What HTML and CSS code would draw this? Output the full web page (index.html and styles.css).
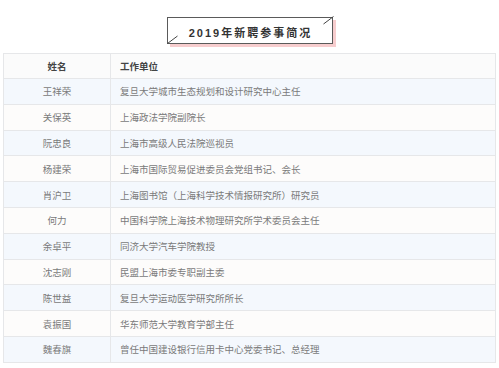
FILE: index.html
```html
<!DOCTYPE html>
<html lang="zh-CN">
<head>
<meta charset="utf-8">
<title>2019年新聘参事简况</title>
<link rel="stylesheet" href="styles.css">
</head>
<body>
<div class="page">
  <div class="title-wrap">
    <div class="title">
      <span class="title-text">2019年新聘参事简况</span>
      <svg class="corner corner-tr" width="11" height="9" viewBox="0 0 11 9"><line x1="0.5" y1="8" x2="10.5" y2="0.5" stroke="#444" stroke-width="1"/></svg>
      <svg class="corner corner-bl" width="11" height="9" viewBox="0 0 11 9"><line x1="0.5" y1="8.5" x2="10.5" y2="1" stroke="#444" stroke-width="1"/></svg>
    </div>
  </div>
  <table class="list">
    <thead>
      <tr><th class="c-name">姓名</th><th class="c-work">工作单位</th></tr>
    </thead>
    <tbody>
      <tr><td class="c-name">王祥荣</td><td class="c-work">复旦大学城市生态规划和设计研究中心主任</td></tr>
      <tr><td class="c-name">关保英</td><td class="c-work">上海政法学院副院长</td></tr>
      <tr><td class="c-name">阮忠良</td><td class="c-work">上海市高级人民法院巡视员</td></tr>
      <tr><td class="c-name">杨建荣</td><td class="c-work">上海市国际贸易促进委员会党组书记、会长</td></tr>
      <tr><td class="c-name">肖沪卫</td><td class="c-work">上海图书馆（上海科学技术情报研究所）研究员</td></tr>
      <tr><td class="c-name">何力</td><td class="c-work">中国科学院上海技术物理研究所学术委员会主任</td></tr>
      <tr><td class="c-name">余卓平</td><td class="c-work">同济大学汽车学院教授</td></tr>
      <tr><td class="c-name">沈志刚</td><td class="c-work">民盟上海市委专职副主委</td></tr>
      <tr><td class="c-name">陈世益</td><td class="c-work">复旦大学运动医学研究所所长</td></tr>
      <tr><td class="c-name">袁振国</td><td class="c-work">华东师范大学教育学部主任</td></tr>
      <tr><td class="c-name">魏春旗</td><td class="c-work">曾任中国建设银行信用卡中心党委书记、总经理</td></tr>
    </tbody>
  </table>
</div>
</body>
</html>
```
FILE: styles.css
```css
html, body {
  margin: 0;
  padding: 0;
  background: #ffffff;
}
body {
  font-family: "Noto Sans CJK SC", "Noto Sans", sans-serif;
}
.page {
  padding: 17px 3px 0 3px;
}
.title-wrap {
  display: flex;
  justify-content: center;
}
.title {
  position: relative;
  box-sizing: border-box;
  width: 166px;
  height: 27px;
  border: 1px solid #5a5a5a;
  background: #ffffff;
  box-shadow: 3px 3px 0 #f7cdce;
  display: flex;
  align-items: center;
  justify-content: center;
  padding-top: 2px;
}
.title-text {
  font-family: "Liberation Sans", "Noto Sans CJK SC", sans-serif;
  font-size: 11px;
  font-weight: bold;
  letter-spacing: 2px;
  color: #333333;
  margin-right: -2px;
}
.corner {
  position: absolute;
  display: block;
}
.corner-tr {
  right: -2px;
  top: -2px;
}
.corner-bl {
  left: -1px;
  bottom: -1px;
}
.list {
  margin-top: 9px;
  width: 493px;
  border-collapse: collapse;
  table-layout: fixed;
  font-size: 9.5px;
}
.list th,
.list td {
  border: 1px solid #e6e7e9;
  height: 24.8px;
  padding: 0;
  line-height: 12px;
  white-space: nowrap;
}
.list th {
  background: #fbfbfb;
  color: #444444;
  font-weight: bold;
  height: 24px;
}
.list tbody tr:nth-child(odd) td {
  background: #f4f8fd;
}
.list tbody tr:nth-child(even) td {
  background: #fdfcfb;
}
.list td {
  color: #7a7a7a;
}
.c-name {
  width: 106px;
  text-align: center;
}
.c-work {
  text-align: left;
  padding-left: 9px !important;
}
```
